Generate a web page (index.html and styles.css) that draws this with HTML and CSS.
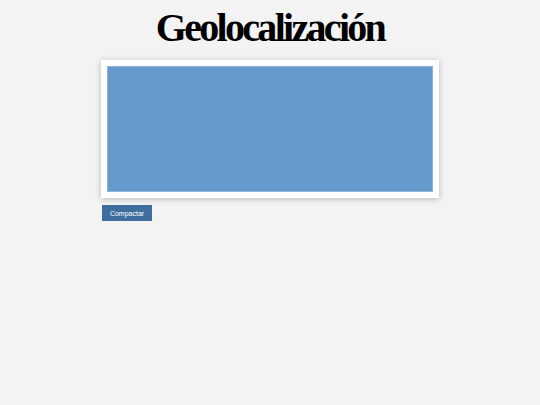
FILE: index.html
```html
<!DOCTYPE html>
<html lang="es">
<head>
  <meta charset="UTF-8">
  <meta name="viewport" content="width=device-width, initial-scale=1.0">
  <title>Geolocalización</title>
  <link rel="stylesheet" href="styles.css">
</head>
<body>

  <h1>Geolocalización</h1>

  <div class="map-wrap">
    <div class="map-frame">
      <div class="map" id="map"></div>
    </div>
    <button class="btn" id="toggle-btn">Compactar</button>
  </div>

</body>
</html>
```

FILE: styles.css
```css
body {
  margin: 0;
  background-color: #f3f3f3;
  font-family: 'Liberation Sans', Arial, sans-serif;
}

h1 {
  font-family: 'Liberation Serif', 'Times New Roman', serif;
  font-weight: bold;
  font-size: 40px;
  letter-spacing: -2.7px;
  line-height: 1;
  text-align: center;
  color: #000;
  margin: 0;
  padding-top: 8px;
  height: 52px;
}

.map-wrap {
  width: 338px;
  margin: 0 auto;
}

.map-frame {
  background-color: #fff;
  padding: 6px;
  box-shadow: 0 1px 6px rgba(0, 0, 0, 0.25);
}

.map {
  height: 124px;
  background-color: #6699cc;
  border: 1px solid #8fb4da;
}

.btn {
  display: block;
  margin: 7px 0 0 1px;
  width: 50px;
  height: 16px;
  padding: 0;
  border: none;
  background-color: #3f6e9e;
  color: #fff;
  font-family: 'Liberation Sans', Arial, sans-serif;
  font-size: 7px;
  cursor: pointer;
}
```
